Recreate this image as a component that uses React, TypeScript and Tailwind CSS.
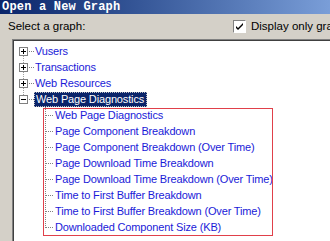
import React from "react";

const topItems = ["Vusers", "Transactions", "Web Resources"];

const childItems = [
  "Web Page Diagnostics",
  "Page Component Breakdown",
  "Page Component Breakdown (Over Time)",
  "Page Download Time Breakdown",
  "Page Download Time Breakdown (Over Time)",
  "Time to First Buffer Breakdown",
  "Time to First Buffer Breakdown (Over Time)",
  "Downloaded Component Size (KB)",
];

function ExpandBox({ open }: { open: boolean }) {
  return (
    <span className="relative block h-[9px] w-[9px] border border-[#808080] bg-white">
      <span className="absolute left-[1px] top-[3px] h-[1px] w-[5px] bg-black" />
      {!open ? <span className="absolute left-[3px] top-[1px] h-[5px] w-[1px] bg-black" /> : null}
    </span>
  );
}

function TopRow({ label, open, selected }: { label: string; open?: boolean; selected?: boolean }) {
  return (
    <div className="flex h-[16px] items-center">
      <span className="ml-[5px]">
        <ExpandBox open={!!open} />
      </span>
      <span className="ml-[1px] w-[5px] border-t border-dotted border-[#808080]" />
      {selected ? (
        <span className="flex h-[15px] items-center border border-dotted border-[#c0c0c0] bg-[#0a246a] pl-[1px] pr-[2px] text-white">
          {label}
        </span>
      ) : (
        <span className="ml-[1px] text-[#1a1ad8]">{label}</span>
      )}
    </div>
  );
}

export default function App() {
  return (
    <div
      className="flex h-[241px] w-[330px] flex-col overflow-hidden bg-[#d4d0c8] text-[11px] tracking-[-0.15px]"
      style={{ fontFamily: '"Liberation Sans", Arial, sans-serif' }}
    >
      <div
        className="h-[14px] shrink-0 bg-gradient-to-r from-[#0a246a] to-[#7a9ed8] pl-[2px] text-[12px] font-bold leading-[14px] tracking-[0.2px] text-white"
        style={{ fontFamily: '"Liberation Mono", "Courier New", monospace' }}
      >
        Open a New Graph
      </div>

      <div className="flex h-[25px] shrink-0 items-center text-[11.5px] tracking-normal">
        <span className="w-[233px] shrink-0 pl-[8px] text-black">Select a graph:</span>
        <span className="relative block h-[13px] w-[13px] shrink-0 border border-t-[#808080] border-l-[#808080] border-b-white border-r-white bg-white">
          <svg viewBox="0 0 11 11" className="absolute left-0 top-0 h-[11px] w-[11px]">
            <path d="M2 5 L4 7 L9 2 L9 4 L4 9 L2 7 Z" fill="#000" />
          </svg>
        </span>
        <span className="ml-[5px] whitespace-nowrap text-black">Display only graphs containing data</span>
      </div>

      <div className="ml-[12px] flex-1 border border-r-0 border-b-0 border-[#808080]">
        <div className="relative h-full border border-r-0 border-b-0 border-[#404040] bg-white pt-[2px]">
          <span className="absolute left-[9px] top-[12px] h-[48px] border-l border-dotted border-[#a0a0a0]" />
          {topItems.map((item) => (
            <TopRow key={item} label={item} />
          ))}
          <TopRow label="Web Page Diagnostics" open selected />

          <div className="relative">
            <span className="absolute left-[31px] top-0 h-[121px] border-l border-dotted border-[#808080]" />
            {childItems.map((item) => (
              <div key={item} className="flex h-[16px] items-center">
                <span className="ml-[32px] w-[7px] border-t border-dotted border-[#808080]" />
                <span className="ml-[2px] whitespace-nowrap text-[#1a1ad8]">{item}</span>
              </div>
            ))}
          </div>

          <div className="pointer-events-none absolute left-[29px] top-[67px] h-[128px] w-[230px] border border-[#e0404a]" />
        </div>
      </div>
    </div>
  );
}
